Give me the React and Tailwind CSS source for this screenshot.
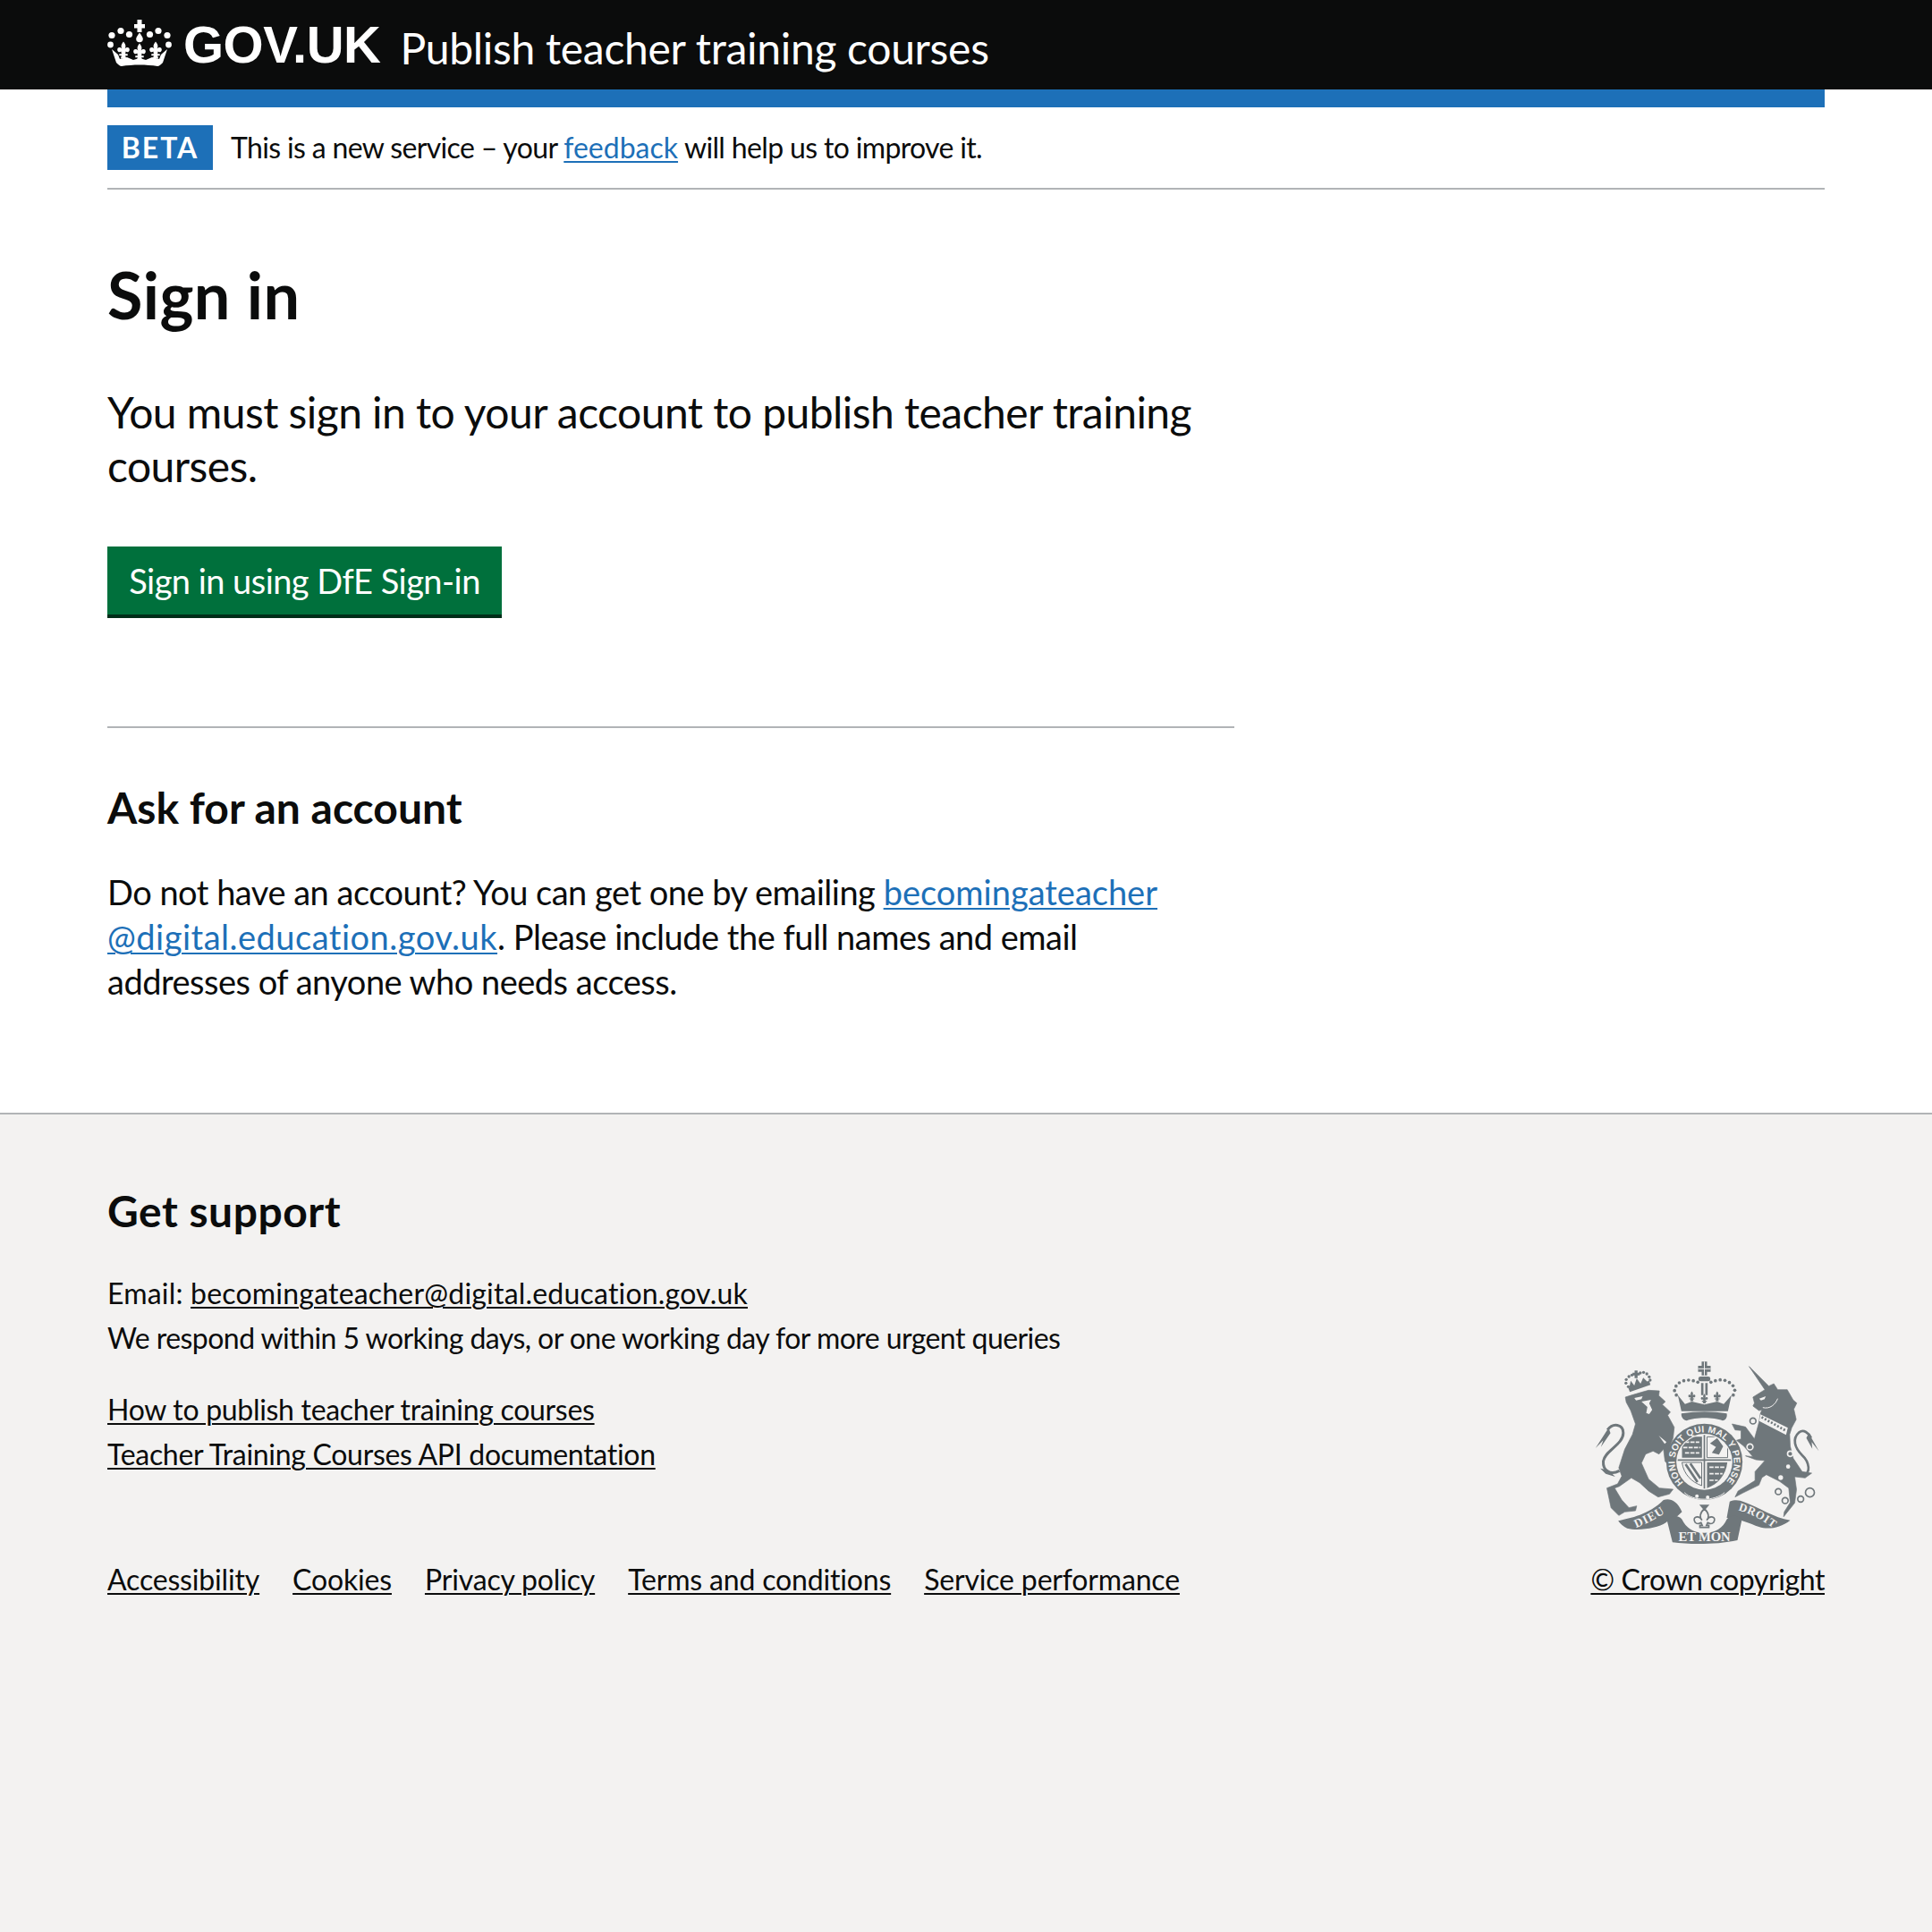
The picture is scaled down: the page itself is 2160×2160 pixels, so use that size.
const CREST = "#6f777b";
const BG = "#f3f2f1";

const Fleur = ({ x, y, s = 1 }) => (
  <path
    transform={`translate(${x} ${y}) scale(${s})`}
    d="M0-9C2.500-6 3-4 1.500-1.500 3-3.500 6.500-3.500 6.500-.5 6.500 2 4 3 2.500 1.500L2 4H4.500V6H2L3 9H-3L-2 6H-4.500V4H-2L-2.500 1.500C-4 3-6.500 2-6.500-.5-6.500-3.500-3-3.500-1.500-1.500-3-4-2.500-6 0-9Z"
  />
);

const CrownLogo = () => (
  <svg viewBox="0 0 72 52" className="w-[72px] h-[52px] shrink-0 mb-[4px]" fill="#fff">
    <path d="M33.500 0h5v5H42v4.500h-3.500V14h-5V9.500H30V5h3.500z" />
    <path d="M36 14.500c2 3 3.800 5 3.800 7a3.800 3.800 0 0 1-7.600 0c0-2 1.800-4 3.800-7z" />
    <circle cx="5" cy="17.500" r="3.600" />
    <circle cx="15" cy="12.500" r="3.600" />
    <circle cx="24.500" cy="16.500" r="3.600" />
    <circle cx="47.500" cy="16.500" r="3.600" />
    <circle cx="57" cy="12.500" r="3.600" />
    <circle cx="67" cy="17.500" r="3.600" />
    <circle cx="3.500" cy="28" r="3.400" />
    <circle cx="68.500" cy="28" r="3.400" />
    <Fleur x={18} y={34} s={1.050} />
    <Fleur x={36} y={36} s={1.050} />
    <Fleur x={54} y={34} s={1.050} />
    <path d="M5 33L12 39 14 44 22 42 29 45 36 43 43 45 50 42 58 44 60 39 67 33 62 48C60 50 58 52 56 52 44 50 28 50 16 52 14 52 12 50 10 48Z" />
  </svg>
);

const LionCrown = () => (
  <g fill={CREST}>
    <path d="M122 94L192 70 196 84 127 108Z" />
    <path d="M143 36h10v7h7v9h-7v9h-10v-9h-7v-9h7z" />
    <path d="M125 95L130 70 142 86 150 62 163 80 172 60 187 75Z" />
    {[[122, 90], [114, 78], [115, 66], [124, 56], [134, 51], [162, 44], [173, 42], [184, 47], [192, 57], [195, 68]].map(([cx, cy]) => (
      <circle key={`${cx}-${cy}`} cx={cx} cy={cy} r="5" />
    ))}
  </g>
);

const Lion = () => (
  <g transform="translate(60 60)">
    <LionCrown />
    <path
      fill={CREST}
      stroke={CREST}
      strokeWidth="2"
      strokeLinejoin="round"
      d="M112 125C135 118 160 110 190 102L226 104 224 120 246 140 236 150 263 175 254 186 276 226 272 262 258 300 250 296 229 256 255 292 280 350 290 366 266 362 245 340 240 300 225 316 205 306 180 316 166 346 190 400 226 430 272 434 260 450 222 460 190 440 160 412 132 396 92 424 76 430 100 470 124 496 150 490 146 506 110 510 90 522 64 496 50 430 86 416 100 390 90 362 110 300 136 250 146 215 130 170 115 142Z"
    />
    <path d="M92 372C62 388 36 372 38 340 42 305 105 285 105 245 105 215 70 210 52 235" fill="none" stroke={CREST} strokeWidth="9" />
    <path d="M56 228L12 296 38 270 30 292 62 246ZM28 364L56 370 78 392 46 382Z" fill={CREST} />
    <g fill={BG}>
      <path d="M142 128L170 122 166 132 148 136Z" />
      <path d="M166 140L198 134 192 146 202 168 192 182 182 178 186 158Z" />
      <path d="M224 254L250 276 244 282Z" />
    </g>
  </g>
);

const Unicorn = () => (
  <g transform="translate(435 60)">
    <path
      fill={CREST}
      stroke={CREST}
      strokeWidth="2"
      strokeLinejoin="round"
      d="M152 22L218 88 235 80 248 100 280 100 300 135 312 145 302 165 310 200 295 228 288 250 290 290 300 330 330 375 362 380 340 396 305 392 311 435 305 480 268 526 270 510 290 478 285 430 255 408 210 385 195 395 185 420 130 447 105 460 115 440 172 405 172 375 205 338 175 335 140 322 165 325 135 290 110 270 125 265 125 237 105 235 95 215 140 225 170 265 185 210 190 180 195 168 185 170 165 155 170 145 165 125 205 100Z"
    />
    <path d="M328 388C365 385 352 340 330 320 305 295 295 265 320 243 335 232 352 245 360 262" fill="none" stroke={CREST} strokeWidth="8" />
    <path d="M352 246L386 306 362 276 364 298 344 262Z" fill={CREST} />
    <g fill={BG}>
      <path d="M190 183L282 228 276 252 186 205Z" />
      <circle cx="258" cy="395" r="8" />
      <circle cx="283" cy="358" r="7" />
      <path d="M186 130L208 122 204 132 192 136Z" />
    </g>
    <path d="M194 192L276 238" stroke={CREST} strokeWidth="8" strokeDasharray="6 6" fill="none" />
    <path d="M198 160C222 166 240 150 248 130" fill="none" stroke={BG} strokeWidth="3" />
    <g fill="none" stroke={BG} strokeWidth="5">
      <circle cx="290" cy="315" r="9" />
      <circle cx="155" cy="292" r="10" />
    </g>
    <g fill="none" stroke={CREST} strokeWidth="5">
      <circle cx="165" cy="205" r="10" />
      <circle cx="250" cy="442" r="10" />
      <circle cx="273" cy="472" r="10" />
      <circle cx="325" cy="467" r="10" />
      <circle cx="356" cy="445" r="15" />
    </g>
  </g>
);

const crownBeads = [
  [343, 178], [337, 163], [342, 148], [353, 137], [368, 130], [384, 128], [400, 130], [415, 135],
  [459, 135], [474, 130], [490, 127], [506, 129], [521, 136], [533, 147], [539, 162], [534, 178],
];

const RoyalCrown = () => (
  <g fill={CREST}>
    <path d="M428 66h18v14h12v20h-12v12h-18v-12h-12V80h12z" />
    <path d="M437 66v46M416 90h42" stroke={BG} strokeWidth="3" />
    <rect x="417" y="116" width="40" height="16" rx="7" />
    <path d="M426 138h8v40h-8zM440 138h8v40h-8z" />
    <Fleur x={395} y={182} s={1.800} />
    <Fleur x={437} y={190} s={1.800} />
    <Fleur x={480} y={182} s={1.800} />
    <path d="M348 178L372 208 395 200 437 210 480 200 502 208 528 178 516 232H360Z" />
    <path d="M360 240C410 232 465 232 512 240 515 252 508 264 498 264 470 252 405 252 378 264 368 264 358 252 360 240Z" />
    {crownBeads.map(([cx, cy]) => (
      <circle key={`${cx}-${cy}`} cx={cx} cy={cy} r="5.500" />
    ))}
  </g>
);

const Shield = () => (
  <g>
    <clipPath id="shield-inner">
      <circle cx="437" cy="402" r="90" />
    </clipPath>
    <circle cx="437" cy="402" r="128" fill={CREST} />
    <circle cx="437" cy="402" r="94" fill={BG} />
    <g clipPath="url(#shield-inner)">
      <path d="M437 298V505M343 396H531" stroke={CREST} strokeWidth="5" />
      <path d="M362 318H429V388H362Z" fill={CREST} />
      <path d="M372 336H420M366 354H424M372 372H420" stroke={BG} strokeWidth="5" strokeDasharray="14 4" />
      <path d="M446 318H515V388H446Z" fill={BG} stroke={CREST} strokeWidth="3" />
      <path d="M456 340L480 322 500 350 486 378 462 372 476 352Z" fill={CREST} />
      <path d="M362 404H428V482C395 470 368 445 362 404Z" fill={BG} stroke={CREST} strokeWidth="3" />
      <path d="M374 410L414 470M390 408L424 458" stroke={CREST} strokeWidth="8" />
      <path d="M446 404H514C510 445 482 478 446 490Z" fill={CREST} />
      <path d="M454 420H504M454 442H498M454 464H482" stroke={BG} strokeWidth="5" strokeDasharray="14 4" />
    </g>
    <path id="garter-ring" d="M367 472A99 99 0 1 1 507 472" fill="none" />
    <text fill={BG} fontFamily="Liberation Sans, sans-serif" fontSize="31" fontWeight="700">
      <textPath href="#garter-ring" textLength="460" lengthAdjust="spacing">HONI SOIT QUI MAL Y PENSE</textPath>
    </text>
    <circle cx="412" cy="517" r="6" fill={BG} />
    <circle cx="448" cy="521" r="6" fill={BG} />
    <path d="M370 505C400 535 470 535 505 505" fill="none" stroke={BG} strokeWidth="3" />
  </g>
);

const Ribbon = () => (
  <g>
    <path d="M148 600C190 590 250 580 300 530 320 523 345 530 362 570L338 592C325 596 314 598 308 606 280 625 215 635 178 625 165 620 155 610 148 600Z" fill={CREST} />
    <path d="M522 535C540 528 555 530 570 537 620 555 670 590 725 598 690 625 650 630 620 620 590 610 555 592 512 590Z" fill={CREST} />
    <path d="M312 600C325 580 350 580 362 595 375 622 400 640 437 640 475 640 500 622 512 595 525 578 552 580 562 600L548 665C480 680 390 680 330 672Z" fill={CREST} />
    <path id="ribbon-left" d="M208 624C250 606 290 586 328 556" fill="none" />
    <text fill={BG} fontFamily="Liberation Serif, serif" fontSize="40" fontWeight="700" letterSpacing="3">
      <textPath href="#ribbon-left">DIEU</textPath>
    </text>
    <text x="437" y="667" fill={BG} fontFamily="Liberation Serif, serif" fontSize="44" fontWeight="700" textAnchor="middle">
      ET MON
    </text>
    <path id="ribbon-right" d="M550 564C590 575 630 595 672 628" fill="none" />
    <text fill={BG} fontFamily="Liberation Serif, serif" fontSize="38" fontWeight="700" letterSpacing="2">
      <textPath href="#ribbon-right">DROIT</textPath>
    </text>
    <path d="M420 546H454L437 566Z" fill={CREST} />
    <path
      d="M437 560C455 575 452 590 445 598 455 580 480 585 468 605 462 612 455 610 448 606L444 615H452V622H422V615H430L426 606C419 610 412 612 406 605 394 585 419 580 429 598 422 590 419 575 437 560Z"
      fill="none"
      stroke={CREST}
      strokeWidth="5"
    />
  </g>
);

const RoyalArms = () => (
  <svg viewBox="70 65 755 615" className="w-[252px] h-[205px] mb-[14px] mr-[5px]">
    <Lion />
    <Unicorn />
    <RoyalCrown />
    <Shield />
    <Ribbon />
  </svg>
);

const FootLink = ({ children }) => (
  <a href="#" className="text-[#0b0c0c] underline decoration-[2px] underline-offset-[3px]">
    {children}
  </a>
);

const BlueLink = ({ children }) => (
  <a href="#" className="text-[#1d70b8] underline decoration-[2px] underline-offset-[3px]">
    {children}
  </a>
);

const metaLinks = ["Accessibility", "Cookies", "Privacy policy", "Terms and conditions", "Service performance"];

export default function App() {
  return (
    <div className="min-h-[2160px] flex flex-col bg-white text-[#0b0c0c] font-['Lato',sans-serif] [font-variant-ligatures:none]">
      <header className="h-[100px] bg-[#0b0c0c] px-[120px] flex items-center text-white">
        <CrownLogo />
        <span className="ml-[13px] text-[58px] font-bold leading-none font-['Liberation_Sans',sans-serif] tracking-[-0.5px]">GOV.UK</span>
        <span className="ml-[22px] mt-[8px] text-[48px] leading-none tracking-[-0.3px]">Publish teacher training courses</span>
      </header>

      <main className="px-[120px] pb-[122px]">
        <div className="h-[20px] bg-[#1d70b8]" />
        <div className="flex items-center h-[92px] border-b-2 border-[#b1b4b6]">
          <strong className="w-[118px] h-[50px] bg-[#1d70b8] text-white text-[32px] font-bold tracking-[2px] flex items-center justify-center">BETA</strong>
          <p className="ml-[20px] text-[32px] leading-[40px] tracking-[-0.65px]">
            This is a new service – your <span className="tracking-[0]"><BlueLink>feedback</BlueLink></span> will help us to improve it.
          </p>
        </div>

        <div className="w-[1260px]">
          <h1 className="mt-[77px] text-[72px] leading-[80px] font-bold tracking-[0.4px]">Sign in</h1>
          <p className="mt-[62px] text-[48px] leading-[60px] tracking-[-0.55px]">
            You must sign in to your account to publish teacher training courses.
          </p>
          <a href="#" className="mt-[60px] w-[441px] h-[80px] bg-[#00703c] border-b-4 border-[#002d18] text-white text-[38px] tracking-[-0.55px] flex items-center justify-center">
            Sign in using DfE Sign-in
          </a>
          <hr className="mt-[121px] border-t-2 border-[#b1b4b6]" />
          <h2 className="mt-[59px] text-[48px] leading-[60px] font-bold">Ask for an account</h2>
          <p className="mt-[39px] max-w-[1240px] text-[38px] leading-[50px] tracking-[-0.5px]">
            Do not have an account? You can get one by emailing <BlueLink><span className="tracking-[0]">becomingateacher</span><wbr /><span className="tracking-[0.5px]">@digital.education.gov.uk</span></BlueLink>. Please include the full names and email addresses of anyone who needs access.
          </p>
        </div>
      </main>

      <footer className="flex-1 bg-[#f3f2f1] border-t-2 border-[#b1b4b6] px-[120px] pt-[78px]">
        <h2 className="text-[48px] leading-[60px] font-bold tracking-[0.5px]">Get support</h2>
        <div className="flex justify-between items-end text-[32px] leading-[50px] tracking-[-0.3px]">
          <div>
            <div className="mt-[37px]">
              <p className="tracking-[0.2px]">Email: <FootLink>becomingateacher@digital.education.gov.uk</FootLink></p>
              <p className="tracking-[-0.55px]">We respond within 5 working days, or one working day for more urgent queries</p>
            </div>
            <div className="mt-[30px]">
              <p><FootLink>How to publish teacher training courses</FootLink></p>
              <p><FootLink>Teacher Training Courses API documentation</FootLink></p>
            </div>
            <ul className="mt-[90px] flex gap-[37px] tracking-[-0.17px]">
              {metaLinks.map((label) => (
                <li key={label}><FootLink>{label}</FootLink></li>
              ))}
            </ul>
          </div>
          <div className="flex flex-col items-end tracking-[-0.4px]">
            <RoyalArms />
            <FootLink>© Crown copyright</FootLink>
          </div>
        </div>
      </footer>
    </div>
  );
}
